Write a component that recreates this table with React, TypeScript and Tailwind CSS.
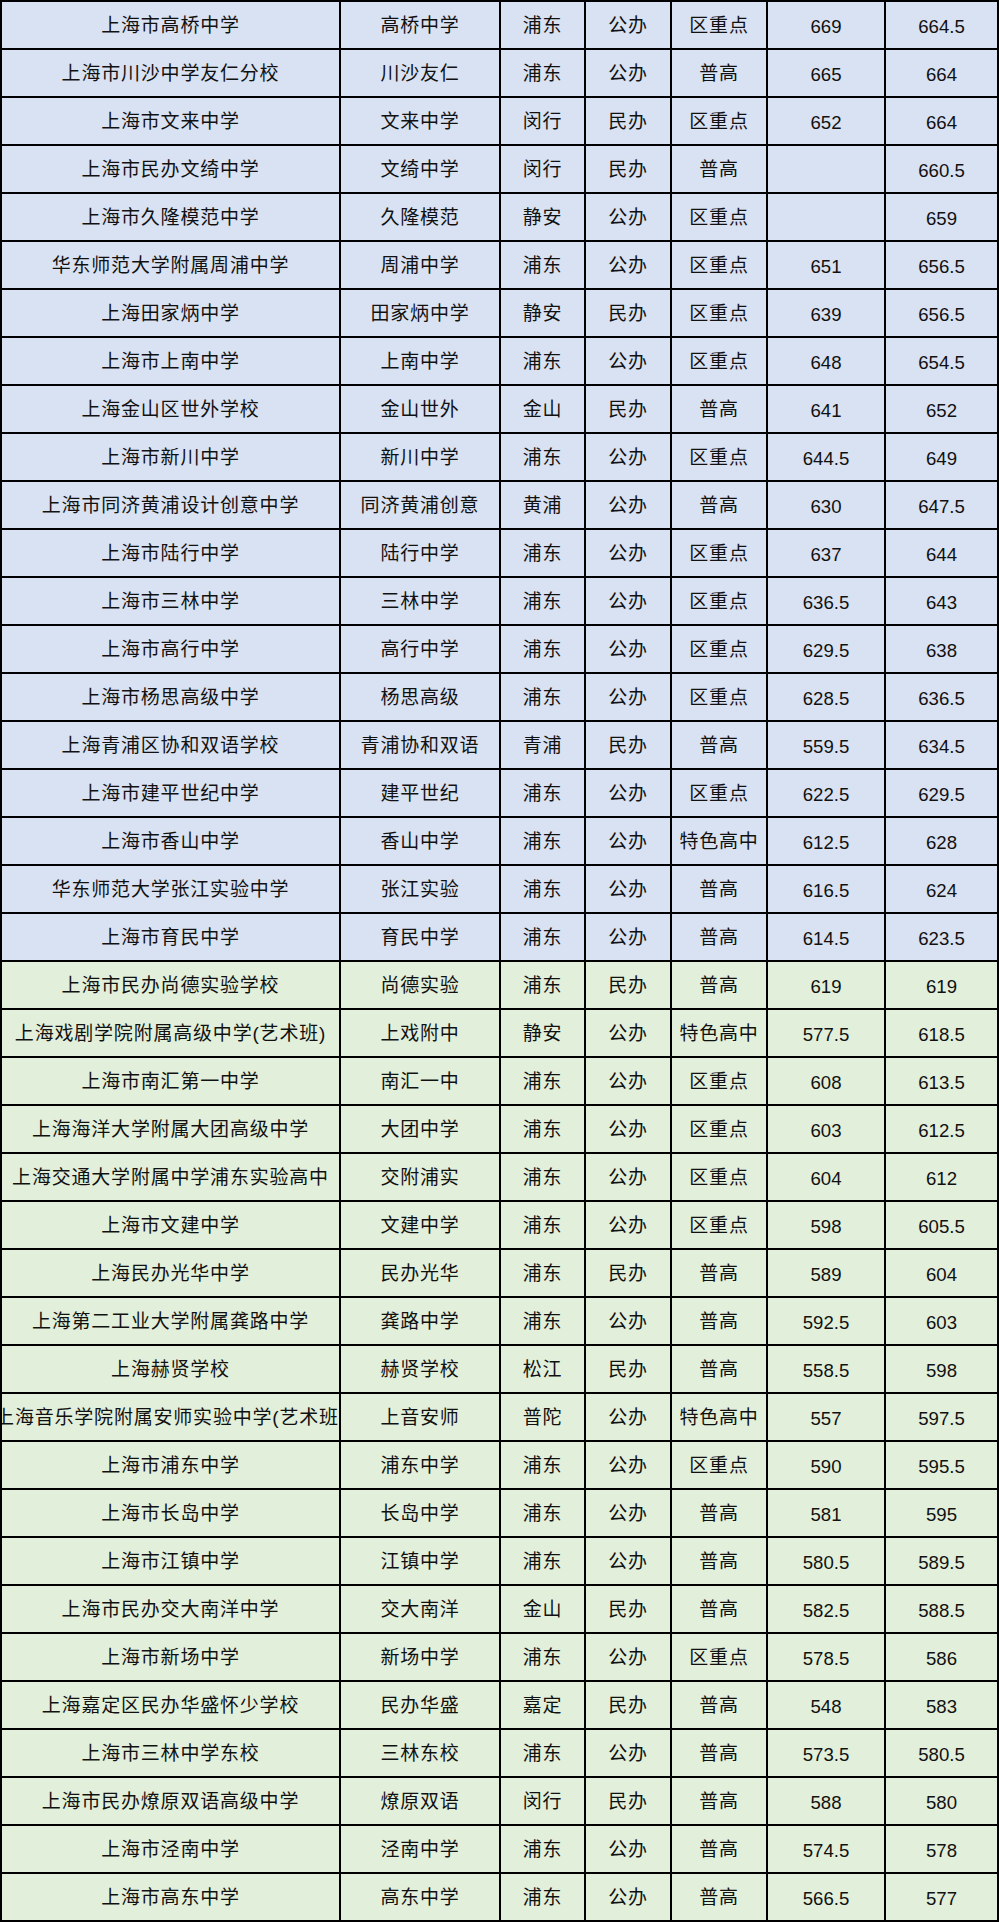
type School = {
  name: string;
  short: string;
  district: string;
  kind: string;
  level: string;
  score2023: string;
  score2024: string;
};

const rows: School[] = [
  ["上海市高桥中学", "高桥中学", "浦东", "公办", "区重点", "669", "664.5"],
  ["上海市川沙中学友仁分校", "川沙友仁", "浦东", "公办", "普高", "665", "664"],
  ["上海市文来中学", "文来中学", "闵行", "民办", "区重点", "652", "664"],
  ["上海市民办文绮中学", "文绮中学", "闵行", "民办", "普高", "", "660.5"],
  ["上海市久隆模范中学", "久隆模范", "静安", "公办", "区重点", "", "659"],
  ["华东师范大学附属周浦中学", "周浦中学", "浦东", "公办", "区重点", "651", "656.5"],
  ["上海田家炳中学", "田家炳中学", "静安", "民办", "区重点", "639", "656.5"],
  ["上海市上南中学", "上南中学", "浦东", "公办", "区重点", "648", "654.5"],
  ["上海金山区世外学校", "金山世外", "金山", "民办", "普高", "641", "652"],
  ["上海市新川中学", "新川中学", "浦东", "公办", "区重点", "644.5", "649"],
  ["上海市同济黄浦设计创意中学", "同济黄浦创意", "黄浦", "公办", "普高", "630", "647.5"],
  ["上海市陆行中学", "陆行中学", "浦东", "公办", "区重点", "637", "644"],
  ["上海市三林中学", "三林中学", "浦东", "公办", "区重点", "636.5", "643"],
  ["上海市高行中学", "高行中学", "浦东", "公办", "区重点", "629.5", "638"],
  ["上海市杨思高级中学", "杨思高级", "浦东", "公办", "区重点", "628.5", "636.5"],
  ["上海青浦区协和双语学校", "青浦协和双语", "青浦", "民办", "普高", "559.5", "634.5"],
  ["上海市建平世纪中学", "建平世纪", "浦东", "公办", "区重点", "622.5", "629.5"],
  ["上海市香山中学", "香山中学", "浦东", "公办", "特色高中", "612.5", "628"],
  ["华东师范大学张江实验中学", "张江实验", "浦东", "公办", "普高", "616.5", "624"],
  ["上海市育民中学", "育民中学", "浦东", "公办", "普高", "614.5", "623.5"],
  ["上海市民办尚德实验学校", "尚德实验", "浦东", "民办", "普高", "619", "619"],
  ["上海戏剧学院附属高级中学(艺术班)", "上戏附中", "静安", "公办", "特色高中", "577.5", "618.5"],
  ["上海市南汇第一中学", "南汇一中", "浦东", "公办", "区重点", "608", "613.5"],
  ["上海海洋大学附属大团高级中学", "大团中学", "浦东", "公办", "区重点", "603", "612.5"],
  ["上海交通大学附属中学浦东实验高中", "交附浦实", "浦东", "公办", "区重点", "604", "612"],
  ["上海市文建中学", "文建中学", "浦东", "公办", "区重点", "598", "605.5"],
  ["上海民办光华中学", "民办光华", "浦东", "民办", "普高", "589", "604"],
  ["上海第二工业大学附属龚路中学", "龚路中学", "浦东", "公办", "普高", "592.5", "603"],
  ["上海赫贤学校", "赫贤学校", "松江", "民办", "普高", "558.5", "598"],
  ["上海音乐学院附属安师实验中学(艺术班)", "上音安师", "普陀", "公办", "特色高中", "557", "597.5"],
  ["上海市浦东中学", "浦东中学", "浦东", "公办", "区重点", "590", "595.5"],
  ["上海市长岛中学", "长岛中学", "浦东", "公办", "普高", "581", "595"],
  ["上海市江镇中学", "江镇中学", "浦东", "公办", "普高", "580.5", "589.5"],
  ["上海市民办交大南洋中学", "交大南洋", "金山", "民办", "普高", "582.5", "588.5"],
  ["上海市新场中学", "新场中学", "浦东", "公办", "区重点", "578.5", "586"],
  ["上海嘉定区民办华盛怀少学校", "民办华盛", "嘉定", "民办", "普高", "548", "583"],
  ["上海市三林中学东校", "三林东校", "浦东", "公办", "普高", "573.5", "580.5"],
  ["上海市民办燎原双语高级中学", "燎原双语", "闵行", "民办", "普高", "588", "580"],
  ["上海市泾南中学", "泾南中学", "浦东", "公办", "普高", "574.5", "578"],
  ["上海市高东中学", "高东中学", "浦东", "公办", "普高", "566.5", "577"],
].map(([name, short, district, kind, level, score2023, score2024]) => ({
  name,
  short,
  district,
  kind,
  level,
  score2023,
  score2024,
}));

// the long art-class names overflow their cell and get clipped on both sides, as in the sheet
const cell =
  "flex items-center justify-center overflow-hidden whitespace-nowrap border-r-2 border-black pt-[3px]";
const cjk = "text-[19px] tracking-[0.8px]";
const num = "text-[18.6px]";

export default function App() {
  return (
    <div
      className="w-[999px] border-t-2 border-l-2 border-black text-[#111]"
      style={{ fontFamily: '"Liberation Sans", "Noto Sans CJK SC", sans-serif' }}
    >
      {rows.map((row, i) => (
        <div
          key={row.name}
          className={`grid h-12 grid-cols-[339px_160px_85px_86px_96px_118px_113px] border-b-2 border-black ${
            i < 20 ? "bg-[#d9e2f2]" : "bg-[#e2efda]"
          }`}
        >
          <div className={`${cell} ${cjk}`}>{row.name}</div>
          <div className={`${cell} ${cjk}`}>{row.short}</div>
          <div className={`${cell} ${cjk}`}>{row.district}</div>
          <div className={`${cell} ${cjk}`}>{row.kind}</div>
          <div className={`${cell} ${cjk}`}>{row.level}</div>
          <div className={`${cell} ${num}`}>{row.score2023}</div>
          <div className={`${cell} ${num} border-r-0`}>{row.score2024}</div>
        </div>
      ))}
    </div>
  );
}
